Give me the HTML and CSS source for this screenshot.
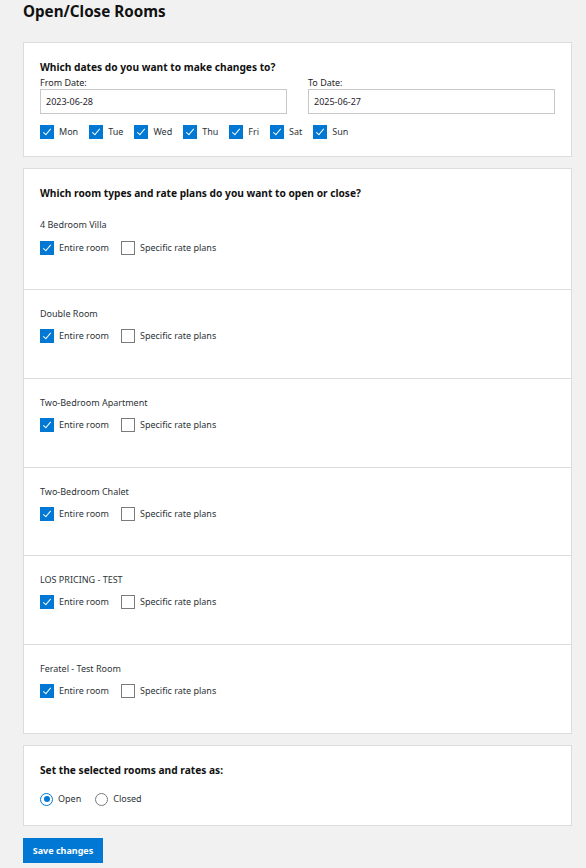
FILE: index.html
```html
<!DOCTYPE html>
<html lang="en">
<head>
<meta charset="utf-8">
<title>Open/Close Rooms</title>
<link rel="stylesheet" href="styles.css">
</head>
<body>
<div class="page">
  <h1 class="title">Open/Close Rooms</h1>

  <section class="card card-dates">
    <h2 class="heading">Which dates do you want to make changes to?</h2>
    <div class="date-grid">
      <label class="field">
        <span class="field-label">From Date:</span>
        <span class="input">2023-06-28</span>
      </label>
      <label class="field">
        <span class="field-label">To Date:</span>
        <span class="input">2025-06-27</span>
      </label>
    </div>
    <div class="days">
      <span class="check-item"><span class="cb on"></span>Mon</span>
      <span class="check-item"><span class="cb on"></span>Tue</span>
      <span class="check-item"><span class="cb on"></span>Wed</span>
      <span class="check-item"><span class="cb on"></span>Thu</span>
      <span class="check-item"><span class="cb on"></span>Fri</span>
      <span class="check-item"><span class="cb on"></span>Sat</span>
      <span class="check-item"><span class="cb on"></span>Sun</span>
    </div>
  </section>

  <section class="card card-rooms">
    <div class="room first">
      <h2 class="heading">Which room types and rate plans do you want to open or close?</h2>
      <div class="room-name">4 Bedroom Villa</div>
      <div class="options">
        <span class="check-item"><span class="cb on"></span>Entire room</span>
        <span class="check-item"><span class="cb"></span>Specific rate plans</span>
      </div>
    </div>
    <div class="room">
      <div class="room-name">Double Room</div>
      <div class="options">
        <span class="check-item"><span class="cb on"></span>Entire room</span>
        <span class="check-item"><span class="cb"></span>Specific rate plans</span>
      </div>
    </div>
    <div class="room">
      <div class="room-name">Two-Bedroom Apartment</div>
      <div class="options">
        <span class="check-item"><span class="cb on"></span>Entire room</span>
        <span class="check-item"><span class="cb"></span>Specific rate plans</span>
      </div>
    </div>
    <div class="room short">
      <div class="room-name">Two-Bedroom Chalet</div>
      <div class="options">
        <span class="check-item"><span class="cb on"></span>Entire room</span>
        <span class="check-item"><span class="cb"></span>Specific rate plans</span>
      </div>
    </div>
    <div class="room">
      <div class="room-name">LOS PRICING - TEST</div>
      <div class="options">
        <span class="check-item"><span class="cb on"></span>Entire room</span>
        <span class="check-item"><span class="cb"></span>Specific rate plans</span>
      </div>
    </div>
    <div class="room">
      <div class="room-name">Feratel - Test Room</div>
      <div class="options">
        <span class="check-item"><span class="cb on"></span>Entire room</span>
        <span class="check-item"><span class="cb"></span>Specific rate plans</span>
      </div>
    </div>
  </section>

  <section class="card card-status">
    <h2 class="heading">Set the selected rooms and rates as:</h2>
    <div class="options radios">
      <span class="check-item"><span class="radio on"></span>Open</span>
      <span class="check-item"><span class="radio"></span>Closed</span>
    </div>
  </section>

  <button class="btn" type="button">Save changes</button>
</div>
</body>
</html>
```
FILE: styles.css
```css
html, body {
  margin: 0;
  padding: 0;
  background: #f1f1f1;
}
body {
  font-family: "Noto Sans", "Open Sans", sans-serif;
  color: #1d2327;
  font-size: 9px;
}
.page {
  width: 549px;
  padding: 0 0 0 23px;
  display: flex;
  flex-direction: column;
  align-items: flex-start;
}
.title {
  margin: 0;
  font-size: 15.2px;
  line-height: 22px;
  font-weight: 700;
  color: #111;
  height: 42px;
}
.card {
  box-sizing: border-box;
  width: 549px;
  background: #fff;
  border: 1px solid #dcdcde;
  margin-bottom: 11px;
}
.card-dates {
  padding: 17px 16px 0;
  height: 115px;
}
.heading {
  margin: 0;
  font-size: 10.2px;
  line-height: 14px;
  font-weight: 700;
  color: #111;
}
.card-dates .heading {
  margin-bottom: 2px;
}
.date-grid {
  display: grid;
  grid-template-columns: 247px 247px;
  column-gap: 21px;
}
.field {
  display: flex;
  flex-direction: column;
}
.field-label {
  line-height: 13px;
}
.input {
  box-sizing: border-box;
  height: 25px;
  border: 1px solid #c9c9c9;
  padding: 0 5px;
  display: flex;
  align-items: center;
  color: #1e1e2e;
}
.days {
  display: flex;
  gap: 11px;
  margin-top: 11px;
}
.check-item {
  display: inline-flex;
  align-items: center;
  gap: 5px;
  line-height: 14px;
  color: #2c3338;
}
.cb {
  box-sizing: border-box;
  width: 14px;
  height: 14px;
  border: 1px solid #7a7a7a;
  background: #fff;
  position: relative;
  flex: none;
}
.cb.on {
  background: #0078d4;
  border-color: #0078d4;
}
.cb.on::after {
  content: "";
  position: absolute;
  left: 4px;
  top: 1px;
  width: 3px;
  height: 7px;
  border: solid #fff;
  border-width: 0 1px 1px 0;
  transform: rotate(40deg);
}
.card-rooms {
  padding: 0;
}
.room {
  box-sizing: border-box;
  height: 89px;
  padding: 17px 16px 0;
  border-top: 1px solid #dcdcde;
}
.room.short {
  height: 88px;
}
.room.first {
  border-top: 0;
  height: 120px;
  padding-top: 17px;
}
.room.first .heading {
  margin-bottom: 18px;
}
.room.first .options {
  margin-top: 10px;
}
.room-name {
  line-height: 13px;
  color: #2c3338;
}
.options {
  display: flex;
  gap: 12px;
  margin-top: 9px;
}
.card-status {
  padding: 17px 16px 0;
  height: 81px;
}
.radios {
  margin-top: 15px;
  gap: 14px;
}
.radio {
  box-sizing: border-box;
  width: 13px;
  height: 13px;
  border-radius: 50%;
  border: 1px solid #7a7a7a;
  background: #fff;
  position: relative;
  flex: none;
}
.radio.on {
  border-color: #0078d4;
}
.radio.on::after {
  content: "";
  position: absolute;
  left: 2.5px;
  top: 2.5px;
  width: 6px;
  height: 6px;
  border-radius: 50%;
  background: #0078d4;
}
.btn {
  margin-top: 1px;
  width: 80px;
  height: 25px;
  border: 0;
  background: #0078d4;
  color: #fff;
  font-family: inherit;
  font-size: 9px;
  font-weight: 700;
  padding: 0;
}
```
